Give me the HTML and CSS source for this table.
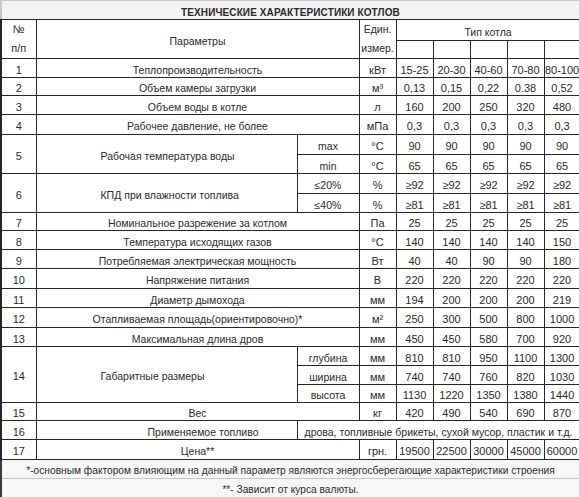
FILE: index.html
```html
<!DOCTYPE html>
<html lang="ru">
<head>
<meta charset="utf-8">
<title>Технические характеристики котлов</title>
<link rel="stylesheet" href="styles.css">
</head>
<body>
<div class="sheet">
  <div class="title">ТЕХНИЧЕСКИЕ ХАРАКТЕРИСТИКИ КОТЛОВ</div>
  <table class="spec">
    <colgroup>
      <col class="c-num"><col class="c-par"><col class="c-sub"><col class="c-unit">
      <col class="c-val"><col class="c-val"><col class="c-val"><col class="c-val"><col class="c-last">
    </colgroup>
    <tr class="h21">
      <td class="num two" rowspan="2"><span class="l1">№</span><span class="l2">п/п</span></td>
      <td class="par" colspan="2" rowspan="2">Параметры</td>
      <td class="unit two" rowspan="2"><span class="l1">Един.</span><span class="l2">измер.</span></td>
      <td class="par" colspan="5">Тип котла</td>
    </tr>
    <tr class="h18"><td></td><td></td><td></td><td></td><td></td></tr>

    <tr class="h19"><td class="num">1</td><td class="par" colspan="2">Теплопроизводительность</td><td>кВт</td><td>15-25</td><td>20-30</td><td>40-60</td><td>70-80</td><td>80-100</td></tr>
    <tr class="h18"><td class="num">2</td><td class="par" colspan="2">Объем камеры загрузки</td><td>м³</td><td>0,13</td><td>0,15</td><td>0,22</td><td>0.38</td><td>0,52</td></tr>
    <tr class="h19"><td class="num">3</td><td class="par" colspan="2">Объем воды в котле</td><td>л</td><td>160</td><td>200</td><td>250</td><td>320</td><td>480</td></tr>
    <tr class="h20"><td class="num">4</td><td class="par" colspan="2">Рабочее давление, не более</td><td>мПа</td><td>0,3</td><td>0,3</td><td>0,3</td><td>0,3</td><td>0,3</td></tr>

    <tr class="h20"><td class="num" rowspan="2">5</td><td class="par left" rowspan="2">Рабочая температура воды</td><td class="par">max</td><td>°C</td><td>90</td><td>90</td><td>90</td><td>90</td><td>90</td></tr>
    <tr class="h19"><td class="par">min</td><td>°C</td><td>65</td><td>65</td><td>65</td><td>65</td><td>65</td></tr>

    <tr class="h20"><td class="num" rowspan="2">6</td><td class="par left" rowspan="2">КПД при влажности топлива</td><td class="par">≤20%</td><td>%</td><td>≥92</td><td>≥92</td><td>≥92</td><td>≥92</td><td>≥92</td></tr>
    <tr class="h19"><td class="par">≤40%</td><td>%</td><td>≥81</td><td>≥81</td><td>≥81</td><td>≥81</td><td>≥81</td></tr>

    <tr class="h18"><td class="num">7</td><td class="par" colspan="2">Номинальное разрежение за котлом</td><td>Па</td><td>25</td><td>25</td><td>25</td><td>25</td><td>25</td></tr>
    <tr class="h19"><td class="num">8</td><td class="par" colspan="2">Температура исходящих газов</td><td>°C</td><td>140</td><td>140</td><td>140</td><td>140</td><td>150</td></tr>
    <tr class="h19"><td class="num">9</td><td class="par" colspan="2">Потребляемая электрическая мощность</td><td>Вт</td><td>40</td><td>40</td><td>90</td><td>90</td><td>180</td></tr>
    <tr class="h20"><td class="num">10</td><td class="par" colspan="2">Напряжение питания</td><td>В</td><td>220</td><td>220</td><td>220</td><td>220</td><td>220</td></tr>
    <tr class="h19"><td class="num">11</td><td class="par" colspan="2">Диаметр дымохода</td><td>мм</td><td>194</td><td>200</td><td>200</td><td>200</td><td>219</td></tr>
    <tr class="h20"><td class="num">12</td><td class="par" colspan="2">Отапливаемая площадь(ориентировочно)*</td><td>м²</td><td>250</td><td>300</td><td>500</td><td>800</td><td>1000</td></tr>
    <tr class="h19"><td class="num">13</td><td class="par" colspan="2">Максимальная длина дров</td><td>мм</td><td>450</td><td>450</td><td>580</td><td>700</td><td>920</td></tr>

    <tr class="h19"><td class="num" rowspan="3">14</td><td class="par left" rowspan="3">Габаритные размеры</td><td class="par">глубина</td><td>мм</td><td>810</td><td>810</td><td>950</td><td>1100</td><td>1300</td></tr>
    <tr class="h19"><td class="par">ширина</td><td>мм</td><td>740</td><td>740</td><td>760</td><td>820</td><td>1030</td></tr>
    <tr class="h17"><td class="par">высота</td><td>мм</td><td>1130</td><td>1220</td><td>1350</td><td>1380</td><td>1440</td></tr>

    <tr class="h18"><td class="num">15</td><td class="par" colspan="2">Вес</td><td>кг</td><td>420</td><td>490</td><td>540</td><td>690</td><td>870</td></tr>
    <tr class="h19"><td class="num">16</td><td class="par fuel-name">Применяемое топливо</td><td class="par" colspan="7">дрова, топливные брикеты, сухой мусор, пластик и т.д.</td></tr>
    <tr class="h20"><td class="num">17</td><td class="par" colspan="2">Цена**</td><td>грн.</td><td>19500</td><td>22500</td><td>30000</td><td>45000</td><td>60000</td></tr>
  </table>
  <div class="notes">
    <div class="note">*-основным фактором влияющим на данный параметр являются энергосберегающие характеристики строения</div>
    <div class="note">**- Зависит от курса валюты.</div>
  </div>
</div>
</body>
</html>
```
FILE: styles.css
```css
html, body {
  margin: 0;
  padding: 0;
  background: #ffffff;
}

body {
  font-family: "Liberation Sans", Arial, sans-serif;
  color: #2b2b2b;
}

.sheet {
  width: 579px;
  overflow: hidden;
}

.title {
  box-sizing: border-box;
  height: 19px;
  border-top: 1px solid #c9c9c9;
  border-left: 2px solid #c9c9c9;
  background: #f3f3f3;
  font-size: 10px;
  font-weight: bold;
  text-align: center;
  line-height: 23px;
  letter-spacing: 0.1px;
}

.spec {
  border-collapse: collapse;
  table-layout: fixed;
  width: 579px;
}

.c-num { width: 35px; }
.c-par { width: 261px; }
.c-sub { width: 62px; }
.c-unit { width: 37px; }
.c-val { width: 37px; }
.c-last { width: 36px; }

.spec td {
  border: 1px solid #262626;
  padding: 4px 0 0 0;
  text-align: center;
  vertical-align: middle;
  font-size: 11px;
  line-height: 13px;
  white-space: nowrap;
  overflow: hidden;
}

.spec td.num {
  border-left: 2px solid #262626;
}

.spec td.par {
  font-size: 10.5px;
}

.spec td.left {
  text-align: left;
  padding-left: 64px;
}

.spec td.fuel-name {
  padding-left: 73px;
}

.spec td.two {
  line-height: 19px;
  padding-top: 0;
}

.spec td.unit {
  font-size: 10.5px;
}

.l1, .l2 {
  display: block;
}

.h17 { height: 17px; }
.h18 { height: 18px; }
.h19 { height: 19px; }
.h20 { height: 20px; }
.h21 { height: 21px; }

.notes {
  border-left: 2px solid #3a3a3a;
  background: #f7f7f7;
}

.note {
  box-sizing: border-box;
  height: 19px;
  border-bottom: 1px solid #c6c6c6;
  font-size: 10.2px;
  line-height: 22px;
  text-align: center;
}

.note:last-child {
  border-bottom-color: #555555;
}
```
